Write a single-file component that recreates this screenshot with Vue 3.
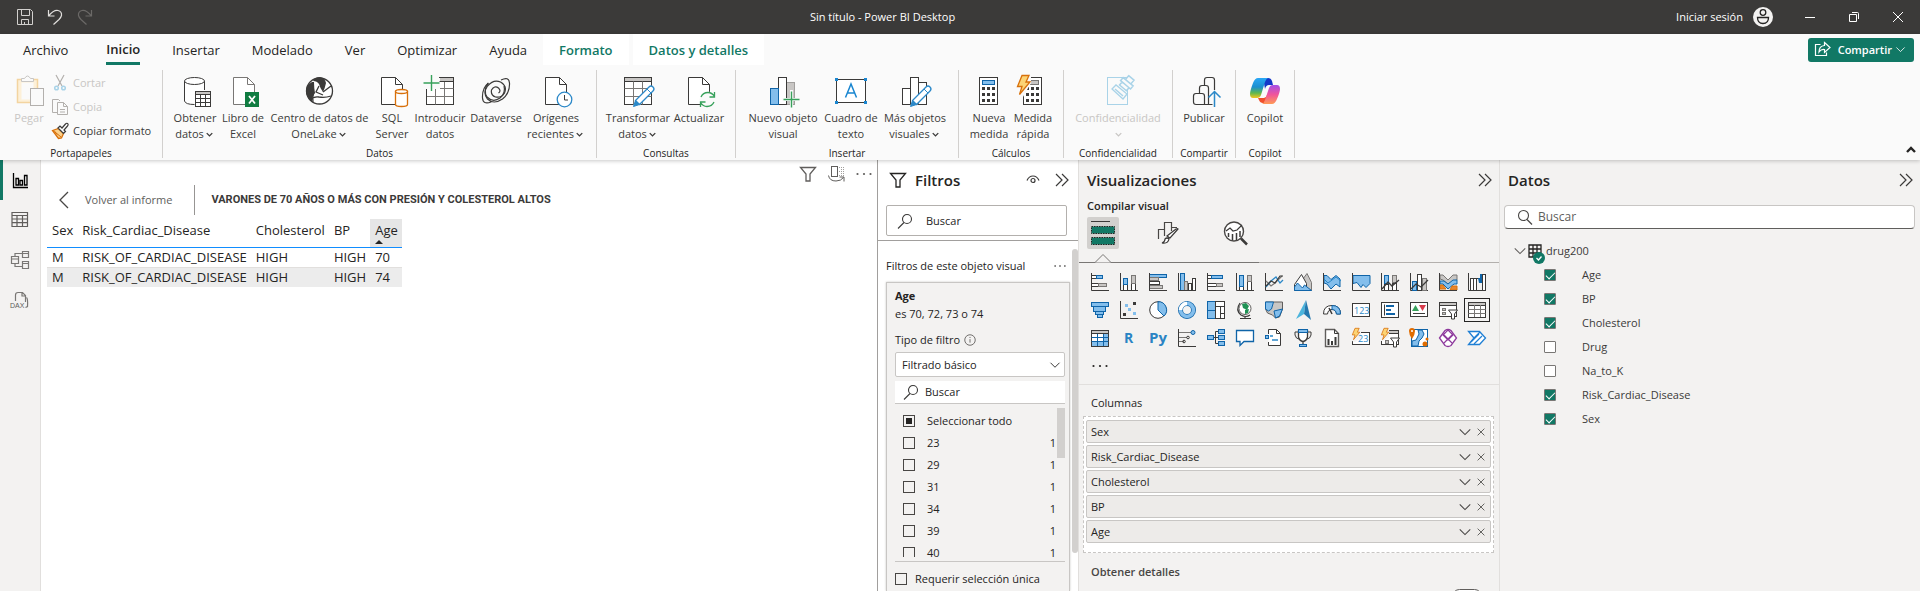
<script setup>
import { h, ref } from 'vue'

const INK = '#3b3a39'
const BLUE = '#83beec'
const EDGE = '#0f64a8'
const GRAY = '#c8c6c4'

const line = (d, stroke = INK, width = 1, extra = '') =>
  `<path d="${d}" fill="none" stroke="${stroke}" stroke-width="${width}" ${extra}/>`
const area = (d, fill, stroke = 'none', width = 1) =>
  `<path d="${d}" fill="${fill}" stroke="${stroke}" stroke-width="${width}"/>`
const box = (x, y, w, hh, fill = '#fff', stroke = INK) =>
  `<rect x="${x}" y="${y}" width="${w}" height="${hh}" fill="${fill}" stroke="${stroke}"/>`
const ring = (x, y, r, fill = 'none', stroke = INK, width = 1) =>
  `<circle cx="${x}" cy="${y}" r="${r}" fill="${fill}" stroke="${stroke}" stroke-width="${width}"/>`

const page = (x, stroke = INK) =>
  area(`M${x} 2.5h14l7 7v20h-21z`, '#fff', stroke) + line(`M${x + 14} 2.5v7h7`, stroke)
const sheet =
  box(2.5, 2.5, 27, 27) + box(2.5, 2.5, 27, 4, GRAY) +
  line('M2.5 13.5h27M2.5 21.5h27M11.5 6.5v23M20.5 6.5v23', '#797775')
const pencil =
  area('M28.5 10.5l3 1.5v3L17 31l-6 1 2-6z', '#fafafa') +
  area('M13.5 25.5L27 12q2-2 4 0t0 4L17.5 29.5z', '#fff', '#2b88c8', 1.3) +
  area('M13.5 25.5l4 4-6 2z', '#2b88c8', '#2b88c8') + line('M25 14l4 4', '#2b88c8')
const plus = (x, y) => line(`M${x} ${y - 8}v16M${x - 8} ${y}h16`, '#37a15b', 1.4)
const dots = (x, y) => [0, 1, 2].map(r => [0, 1, 2].map(c =>
  `<rect x="${x + c * 5}" y="${y + r * 6}" width="3" height="3" fill="${INK}"/>`).join('')).join('')
const bolt = (x, y, s) =>
  `<path transform="translate(${x} ${y}) scale(${s})" d="M5 .5h7L9 7h4L2.5 19.5 5 11.5H.5z" fill="#fcd475" stroke="#d8700b" stroke-width="1.3"/>`
const axis = line('M.5 0v17.5H18')

const large = {
  paste:
    area('M1.5 4.5h20v23h-20z', '#fdf0d8', '#f3d4a0', 1.5) + box(5.5, 7.5, 12, 17, '#fafafa', 'none') +
    area('M5.5 6.5v-3h3q3-5 6 0h3v3z', '#fafafa', '#c8c6c4') + box(14.5, 13.5, 13, 17, '#fafafa', '#b3b0ad'),
  database:
    area('M5.5 6v20q0 4 10 4h10V6', '#fff') + line('M5.5 6v20q1 3.5 10 3.5M25.5 6v9') +
    `<ellipse cx="15.5" cy="6" rx="10" ry="3.5" fill="#fff" stroke="${INK}"/>` +
    box(16.5, 16.5, 15, 15) + box(16.5, 16.5, 15, 3, GRAY) +
    line('M16.5 23.5h15M16.5 27.5h15M21.5 19.5v12M26.5 19.5v12'),
  excel:
    page(6.5, '#797775') + box(18, 17, 14, 15, '#107c41', 'none') +
    line('M22 21l6 7.5M28 21l-6 7.5', '#fff', 1.8),
  onelake:
    ring(15.5, 16, 13, '#fff', INK, 1.3) +
    area('M9 6q2-4 7-4 5 1 6 6-1 5-3 9-3-4-4-8-2-3-6-3z', INK) +
    area('M8 7q-6 3-6 9 0 6 6 11 0-6 3-9-1-5-1-11z', INK) +
    line('M10 17q-2 5-1 10M6 25q4-4 9-3 6 1 12-1M15 11l-3 6 7 3M19 17l8-6', INK, 1.3),
  sql:
    page(5.5) + area('M19.5 16.5v13q0 2 6 2t6-2v-13z', '#fff', '#d8700b', 1.3) +
    '<ellipse cx="25.5" cy="16.5" rx="6" ry="2" fill="#fff" stroke="#d8700b" stroke-width="1.3"/>',
  newtable: sheet + box(0, 0, 16, 14, '#fafafa', 'none') + line('M2.5 15v-1M15 2.5h1') + plus(7.5, 8) + line('M15.5 6.5h14M2.5 15v14'),
  dataverse:
    line('M21 5q8-4 8.5 3 .5 10-7 16-9 6-15 0-5-6 0-13 6-7 13-4 7 4 4 11-3 5-9 4-5-2-4-7 3-5 7-2 3 3 0 5M11 27q-8 3-8.5-4-.5-10 6-15', INK, 1.2) +
    line('M8 8q-5 8-1 14 6 6 13 1 6-5 4-12', INK, 1.2),
  recent: page(5.5) + ring(24.5, 24.5, 7.3, '#fff', '#2b88c8', 1.3) + line('M24.5 20v5H28'),
  transform: sheet + pencil,
  refresh:
    page(5.5) + ring(24.5, 24.5, 8, '#fafafa', 'none') +
    line('M18 22q2-4.5 7-4.5 4 0 6.5 4M31 27q-2 4.5-7 4.5-4 0-6.5-4M31.5 17v5h-5M17.5 32v-5h5', '#37a15b', 1.3),
  newvisual:
    box(19.5, 7.5, 8, 22, GRAY, '#a19f9d') + box(11.5, 2.5, 8, 27) + box(3.5, 13.5, 8, 16, BLUE, EDGE) +
    line('M24.5 15v17M15 24.5h17', '#fafafa', 3) + plus(24.5, 24.5),
  textbox:
    box(1.5, 4.5, 29, 23) +
    [[0, 3], [29, 3], [0, 26], [29, 26]].map(([x, y]) => `<rect x="${x}" y="${y}" width="3" height="3" fill="#1a86d0"/>`).join('') +
    line('M10.5 22.5L16 9l5.5 13.5M12.5 18h7', '#1a86d0', 1.5),
  morevisuals: box(3.5, 13.5, 8, 16) + box(19.5, 7.5, 8, 22) + box(11.5, 2.5, 8, 27) + pencil,
  measure: box(6.5, 2.5, 18, 27) + box(9.5, 5.5, 12, 4, BLUE, EDGE) + dots(9, 12),
  quick: box(6.5, 2.5, 18, 27) + box(9.5, 5.5, 12, 4, GRAY, '#797775') + dots(9, 12) +
    area('M4 0h10v8l-8 14H0z', '#fafafa') + bolt(0, 0, 1),
  sensitivity:
    box(5.5, 2.5, 20, 27, '#fafafa', '#a9d3e8') +
    '<g transform="rotate(40 21 9)" fill="#fafafa" stroke="#a9d3e8" stroke-width="1.5"><path d="M20 -1h7v5h-7zM17 4h13v4H17zM19 8h9v4h-9z"/></g>' +
    area('M10 14l4-4 11 9-4 5z', '#fafafa', '#a9d3e8', 1.3) + line('M13 14l8 7', '#a9d3e8', 1.5),
  publish:
    line('M16.5 10V5q0-2.5 2.5-2.5h5q2.5 0 2.5 2.5v10M11.5 18v-5q0-2.5 2.5-2.5h4q2.5 0 2.5 2.5v16M8 18.5h6q2.5 0 2.5 2.5v8.5H8q-2.5 0-2.5-2.5v-6q0-2.5 2.5-2.5zM16.5 29.5h8', INK, 1.2) +
    line('M26.5 32V17M20.5 22.5l6-6 6 6', '#2b88c8', 1.5),
  copilot:
    '<defs><linearGradient id="cpA" x1="0" y1="0" x2="0" y2="1"><stop offset="0" stop-color="#2aa7f5"/><stop offset=".45" stop-color="#1b8fd0"/><stop offset=".75" stop-color="#5fb84f"/><stop offset="1" stop-color="#f7c51e"/></linearGradient>' +
    '<linearGradient id="cpB" x1="0" y1="0" x2="0" y2="1"><stop offset="0" stop-color="#a54fe8"/><stop offset=".5" stop-color="#f0549b"/><stop offset="1" stop-color="#ff9a55"/></linearGradient></defs>' +
    area('M14 3h5q3 0 4 3l1 4h-4q-3 0-4 4z', '#1438c8') + area('M9 23h6q2 0 3-3l-1 8h-3q-3 0-4-3z', '#f0502c') +
    area('M9 3h10q-2 1-3 4l-4 13q-1 3-4 3H4q-3 0-3-4 0-3 3-11 2-5 5-5z', 'url(#cpA)') +
    area('M23 29H13q2-1 3-4l4-12q1-3 4-3h4q3 0 3 4 0 3-3 10-2 5-5 5z', 'url(#cpB)')
}

const small = {
  save: line('M.5.5h13l2 2v13h-15zM4.5.5v6h8v-6M4.5 15.5v-5h7v5M7.5 15v-2', '#d2d0ce'),
  undo: line('M1.5 1v6h6M1.5 7Q7 .5 11 1.5t3.5 5q-.5 2-2.5 4l-5.5 5', '#e1dfdd', 1.2),
  redo: line('M14.5 1v6h-6M14.5 7Q9 .5 5 1.5t-3.5 5q.5 2 2.5 4l5.5 5', '#6b6967', 1.2),
  cut: line('M4 0l6 11M12 0L6 11', '#b3b0ad', 1.2) + ring(4.5, 13, 1.8, 'none', '#a9d3e8', 1.5) + ring(11.5, 13, 1.8, 'none', '#a9d3e8', 1.5),
  copy: line('M5 13.5H.5V.5h6l1.5 1.5', '#b3b0ad') + area('M5.5 3.5h6l4 4v8h-10z', '#fafafa', '#b3b0ad') + line('M11.5 3.5v4h4M8 10.5h5M8 13h5', '#b3b0ad'),
  brush: area('M.5 7.5l6-2 5 5-2 4.5-3 .5z', '#fbd08a', '#d8700b', 1.3) + line('M3 9l6 5M2 7.5l3 4', '#d8700b') +
    area('M6 5l2-2 2 2 3.5-4q1.5-1.5 2.5 0 .5 1-.5 2L12 7l1.5 1.5-2 2z', '#fff', INK, 1.2),
  share: line('M5.5 2.5h-5v11h11v-3', '#fff', 1.2) + line('M9.5.5l5.5 5-5.5 5v-3Q6 7 4 10q0-6 5.500-6.500z', '#fff', 1.2),
  funnel: line('M.5 1.5h15L10 8v7H6V8z', 'currentColor', 1.3),
  focus: box(3.5, .5, 6, 10, 'none', '#605e5c') + line('M11 1.500h5M11 5.500h5M11 9.500h5M13.500 1v9M15.500 1v9', '#a19f9d', 1, 'stroke-dasharray="1 1"') +
    line('M.5 9.500q1 5.500 7.500 5.500 5 0 7.500-3.500M11.500 11h4.500v4.500', '#605e5c'),
  more: '<g fill="currentColor"><circle cx="1.5" cy="8" r="1.1"/><circle cx="8" cy="8" r="1.1"/><circle cx="14.5" cy="8" r="1.1"/></g>',
  eye: line('M2 8.500q2-4.500 6-4.500t6 4.500', INK, 1.2) + ring(8, 8.5, 2, 'none', INK, 1.2),
  collapse: line('M2 2l6 6-6 6M8 2l6 6-6 6', INK, 1.2),
  find: ring(10, 6, 4.5, 'none', INK, 1.1) + line('M7 9.5L1 15.5', INK, 1.1),
  find2: ring(6.5, 6.5, 5, 'none', '#484644', 1.1) + line('M10 10.5l5 5', '#484644', 1.2),
  info: ring(8, 8, 6, 'none', '#605e5c') + line('M8 7v4M8 4.5v1.2', '#605e5c'),
  down: line('M2 5l6 6 6-6', 'currentColor', 1.2),
  chunky: line('M4 6l4 4 4-4', 'currentColor', 2),
  up: line('M4 10l4-4 4 4', 'currentColor', 2.4),
  close: line('M3.5 3.5l9 9M12.5 3.5l-9 9', 'currentColor', 1.1),
  back: line('M12 0L4 8l8 8', '#484644', 1.3),
  minimize: line('M3 8.5h10', '#fff'),
  restore: line('M3.5 5.5h7v7h-7zM6 3.5h5.5q1 0 1 1V10', '#fff'),
  winclose: line('M3 3l10 10M13 3L3 13', '#fff'),
  datatable: line('M2 2h12v12H2zM2 6h12M2 10h12M6 2v12M10 2v12', '#252423', 1.3)
}

const nav = {
  report: line('M3.5 3v14.5H18', '#000', 1.3) + line('M6 8.5h2.5V15H6zM10 10.5h2.5V15H10zM14.5 5.5H17V15h-2.5z', '#000', 1.3),
  table: line('M2 2.5h15.5v14H2zM2 5.5h15.5M2 9h15.5M2 12.7h15.5M7 5v11M12.5 5v11', '#605e5c', 1.2),
  model: line('M1.5 6.5h7v7h-7zM12.5 1.5h6v6h-6zM12.5 11.5h6v7h-6zM1.5 9h7M12.5 3.5h6M12.5 13.5h6M5 6V3.5h7.5M5 13.5v3h7.5', '#797775', 1.2),
  dax: line('M5.5 11V5q0-2.5 2.5-2.5h4.5l3 3V12M12 3v3h3M16.5 7.5q1.5 1 1 9l-2 1', '#797775', 1.2) +
    '<text x="0" y="18" font-family="Liberation Sans, sans-serif" font-size="7" fill="#605e5c">DAX</text>'
}

const B = (x, y, w, hh) => box(x + .5, y + .5, w, hh, BLUE, EDGE)
const G = (x, y, w, hh) => box(x + .5, y + .5, w, hh, GRAY, '#797775')
const W = (x, y, w, hh) => box(x + .5, y + .5, w, hh)
const glyph = (t, x, size) =>
  `<text x="${x}" y="14" font-family="Open Sans, sans-serif" font-weight="700" font-size="${size}" fill="#2a84c4">${t}</text>`
const num = '<text x="2" y="13" font-family="Open Sans, sans-serif" font-size="9" fill="#2b88c8">123</text>'

const visuals = [
  ['Barras apiladas', axis + W(0, 2, 5, 3) + B(5, 2, 6, 3) + W(0, 10, 7, 3) + G(7, 10, 8, 3)],
  ['Columnas apiladas', axis + W(3, 11, 4, 6) + B(3, 5, 4, 6) + W(11, 10, 4, 7) + G(11, 2, 4, 8)],
  ['Barras agrupadas', axis + B(0, 1, 17, 3) + G(0, 4, 9, 3) + W(0, 8, 10, 3) + G(0, 12, 13, 3) + axis],
  ['Columnas agrupadas', B(2, 0, 4, 17) + G(6, 8, 3, 9) + W(10, 10, 3, 7) + W(14, 5, 3, 12) + axis],
  ['Barras 100 %', axis + W(0, 2, 4, 3) + B(4, 2, 11, 3) + W(0, 10, 9, 3) + G(9, 10, 6, 3)],
  ['Columnas 100 %', axis + W(3, 13, 4, 4) + B(3, 2, 4, 11) + W(11, 8, 4, 9) + G(11, 2, 4, 6)],
  ['Líneas', axis + line('M1 8l5 5 4-3 7-7', '#797775', 1.2) + line('M1 14l5-6 5-4 4 6 3-3', '#2b88c8', 1.3) + line('M1 13l5-5 4 2 5-7 3 0', INK, 1.2)],
  ['Áreas', area('M6 10l7-9.5 4.5 9v8H6z', GRAY, '#797775') + area('M.5 17.5v-6l7-10 5 9v7z', '#fff', INK) + area('M.5 17.5V14l3-4 5 5 2-3 7 5.500z', BLUE, EDGE)],
  ['Áreas apiladas', area('M1 2.500h3l4 4 5-4 4 3.500v8l-4-3-5 5-4-5-3-1z', BLUE, EDGE) + line('M1 6l4 4 4-3 4-3 5 4', '#2b88c8') + axis],
  ['Áreas 100 %', area('M1 2.5h17v8l-4 4-3-3-2 3-4-5-4 1z', BLUE, EDGE) + axis],
  ['Columnas y líneas apiladas', axis + B(3, 2, 4, 8) + W(3, 11, 4, 6) + G(11, 2, 4, 7) + W(11, 10, 4, 7) + line('M1 16l6-7 4 4 7-6', INK, 1.3)],
  ['Columnas y líneas agrupadas', axis + B(2, 8, 4, 9) + W(7, 1, 4, 16) + G(12, 5, 4, 12) + line('M1 16l5-5 5 3 7-7', INK, 1.3)],
  ['Cintas', area('M1 2h3l5 5 5-5h4v5l-4 1-5 3-5-4-3-1z', GRAY, '#797775') + area('M1 8h4l4 3 5-4h4v4h-3l-6 5-5-5H1z', BLUE, EDGE) + area('M1 12h3l3 4H1zM13 13h5v4h-7z', '#e8862e', '#d8700b') + axis],
  ['Cascada', W(2, 5, 3, 12) + W(5, 5, 3, 12) + line('M8.500 5.500h3') + area('M10 5h2V1h3v9h-4z', EDGE) + W(14, 1, 3, 16) + axis],
  ['Embudo', B(0, 1, 17, 4) + B(2, 5, 12, 5) + B(4, 10, 8, 3) + B(6, 13, 5, 3)],
  ['Dispersión', axis + [[5, 3, BLUE], [13, 1, INK], [8, 7, BLUE], [3, 12, INK], [13, 11, BLUE]].map(([x, y, c]) => `<rect x="${x}" y="${y}" width="3" height="3" fill="${c}"/>`).join('')],
  ['Circular', ring(9, 9, 8.3, '#fff') + area('M9 .7A8.3 8.3 0 0 1 15 15L9 9z', BLUE, EDGE)],
  ['Anillos', ring(9, 9, 6.5, 'none', EDGE, 5) + ring(9, 9, 6.5, 'none', BLUE, 3.5) + line('M2.5 9A6.5 6.5 0 0 1 9 2.5', '#fff', 3.5)],
  ['Treemap', B(0, 0, 8, 9) + B(0, 9, 8, 8) + W(8, 0, 9, 5) + W(8, 5, 5, 12) + W(13, 5, 4, 7) + W(13, 12, 4, 5)],
  ['Mapa', ring(9, 7.5, 6, '#fff', '#605e5c') + area('M6 3l4-1 3 3-2 4-4-2zM9 9l4-1-1 4-3 1z', '#1f9254') + line('M4 2q-5 7 1 12 5 3 9 0M9 15v2.5M4 17.5h11', INK, 1.2)],
  ['Mapa coroplético', area('M.5 1h17v7l-3 8-4 1-3-3-5-2-2-4z', GRAY, '#605e5c') + area('M.5 1h8l-2 7-3 2-3-2zM9 10l8.500-2-3 7-4 2z', BLUE, EDGE)],
  ['Azure Maps', area('M12-1L2 18l8-5z', '#4bb4dc') + area('M12-1l5 20-7-6z', '#2478ae')],
  ['Medidor', area('M.5 13q0-8.5 8.5-8.5t8.5 8.5h-4Q13 8.5 9 8.5T4.5 13z', '#fff', INK) + area('M9 4.5q8.5 0 8.5 8.5h-4Q13 8.5 9 8.5z', BLUE, EDGE) + line('M9 13L6 7', INK, 1.5)],
  ['Tarjeta', box(.5, 2.5, 17, 13) + num],
  ['Tarjeta de varias filas', W(0, 1, 17, 15) + line('M3.5 3.5v11') + line('M5 5h8M5 9h5M5 13h9', EDGE, 2)],
  ['KPI', W(0, 1, 17, 14) + area('M2 10l3.5-6L9 10z', '#37a15b') + area('M9 4h7l-3.5 6z', '#d83b4b') + line('M3 12.5h12')],
  ['Segmentación', box(.5, 1.5, 17, 14) + box(.5, 1.5, 17, 3, GRAY) + G(3, 7, 3, 2) + G(3, 11, 3, 2) + area('M9.5 9h9l-3 4v5h-3v-5z', '#fff', INK)],
  ['Tabla', W(0, 1, 17, 15) + box(.5, 1.5, 17, 3, GRAY) + line('M.5 8.5h17M.5 12.5h17M6.5 4v12M12.5 4v12', '#797775')],
  ['Matriz', W(0, 1, 17, 16) + area('M12 5h5v12H1v-4h11z', BLUE) + line('M.5 8.5h17M.5 12.5h17M6.5 4v13M12.5 4v13', EDGE) + box(.5, 1.5, 17, 3, GRAY)],
  ['Script de R', glyph('R', 4, 14)],
  ['Script de Python', glyph('Py', 0, 15)],
  ['Influenciadores clave', axis + line('M1 3.5h12M1 8.5h8M1 12.5h5', '#797775') + ring(15, 3.5, 2, BLUE, EDGE) + ring(10, 8.5, 1.3) + ring(6, 12.5, 1.3)],
  ['Árbol de descomposición', line('M6 8.5h5M8.5 2.5v12M8.5 2.5h3M8.5 14.5h3') + B(0, 6, 6, 4) + B(11, 0, 6, 4) + B(11, 6, 6, 4) + B(11, 12, 6, 4)],
  ['Preguntas y respuestas', area('M.5 1.5h17v11H8l-4 4v-4H.5z', '#fff', EDGE, 1.3)],
  ['Narrativa', area('M3.5 5V.5h8l4 4v12h-12V13', '#fff', INK) + line('M11.5.5v4h4') + line('M5 7h3M7 11h6', '#2b88c8', 1.4) + B(0, 6, 3, 3)],
  ['Objetivos', line('M4 3H1v3q1 4 4 4M14 3h3v3q-1 4-4 4') + area('M4.5 1.5h9V8q-1 4-4.5 4.5Q5.5 12 4.5 8zM9 12v4', '#fff', INK, 1.3) + box(4.5, .5, 9, 3, BLUE, EDGE) + box(5.5, 15.5, 7, 2, BLUE, EDGE)],
  ['Informe paginado', area('M2.5.5h9l4 4v13h-13z', '#fff', '#605e5c', 1.4) + line('M11.5.5v4h4') + line('M5.5 10v6M9 12v4M12.5 8v8', INK, 2)],
  ['Tarjeta nueva', box(.5, 3.5, 17, 12) + area('M0 0h9v9l-6 4-3-1z', '#f3f2f1') + '<text x="6" y="13" font-family="Open Sans, sans-serif" font-size="9" fill="#2b88c8">23</text>' + bolt(0, -1, .6)],
  ['Segmentación nueva', box(.5, 1.5, 17, 14) + box(.5, 1.5, 17, 3, GRAY) + area('M0 0h8v8l-6 4H0z', '#f3f2f1') + G(4, 11, 3, 3) + area('M9.5 9h9l-3 4v5h-3v-5z', '#fff', INK) + bolt(0, -1, .6)],
  ['ArcGIS', box(1.5, .5, 16, 17, '#fff', EDGE) + area('M8 1h4l2 4-2 4-3 3-1 5H2v-5l4-1 3-6z', BLUE, EDGE) + area('M-1 2q0-3 3-3t3 3q0 4-3 8-3-4-3-8z', '#e06c00') + ring(2, 2, 1, '#fff', 'none') + ring(15, 15, 2.5, '#e06c00', 'none') + ring(17, 10, 1.5, '#e06c00', 'none')],
  ['Power Apps', area('M.5 9L6 1.5q3-2 6 0L17.500 9 12 16.500q-3 2-6 0z', '#fff', '#8e3a9d', 1.3) + line('M4 5l9 9M14 5l-9 9M9 1l5 5-5 5-5-5z', '#8e3a9d', 1.2)],
  ['Power Automate', area('M.5 2.5h11L17.5 9l-6 6.5H.5L6 9z', '#fff', '#1f7fd4', 1.3) + line('M6 9l6-6M3 13l8-8M6 15l8-8', '#1f7fd4', 1.2)]
]

const format = line('M1.5 18V8.5h6M7.5 15V1.5h7V10M14.5 6.5H20', '#484644', 1.2) +
  area('M21 8l-8 9-3-2 9-7q2-1 2 0zM12 18q-1 5-7 4 3-1 3-4 2-2 4 0z', '#fff', INK, 1.2)
const analytics = ring(11, 10.5, 9.5, '#fff', '#484644', 1.4) +
  line('M3 10l4-3 3 3 4-1 5-5', INK, 1.2) + line('M5.5 12v4M9.5 13v6M13.5 12v7M17 10v6', INK, 1.5) + line('M18 17.5l6 6', INK, 2.5)
const build = line('M4 4.5h19', INK) +
  '<g fill="#117865" stroke="#252423" stroke-dasharray="1.5 1"><rect x="4.5" y="9.5" width="23" height="7"/><rect x="4.5" y="20.5" width="23" height="7"/></g>'

const Icon = ({ art, s = 16, w }) =>
  h('svg', { width: w || s, height: s, viewBox: `0 0 ${w || s} ${s}`, class: 'icon', 'aria-hidden': 'true', innerHTML: art })
Icon.props = ['art', 's', 'w']

const tabs = ['Archivo', 'Inicio', 'Insertar', 'Modelado', 'Ver', 'Optimizar', 'Ayuda']
const groups = [
  { name: 'Datos', items: [
    ['database', 'Obtener', 'datos', 48, true], ['excel', 'Libro de', 'Excel', 48], ['onelake', 'Centro de datos de', 'OneLake', 105, true],
    ['sql', 'SQL', 'Server', 40], ['newtable', 'Introducir', 'datos', 56], ['dataverse', 'Dataverse', '', 56], ['recent', 'Orígenes', 'recientes', 64, true]] },
  { name: 'Consultas', items: [['transform', 'Transformar', 'datos', 66, true], ['refresh', 'Actualizar', '', 56]] },
  { name: 'Insertar', items: [['newvisual', 'Nuevo objeto', 'visual', 78], ['textbox', 'Cuadro de', 'texto', 58], ['morevisuals', 'Más objetos', 'visuales', 70, true]] },
  { name: 'Cálculos', items: [['measure', 'Nueva', 'medida', 44], ['quick', 'Medida', 'rápida', 44]] },
  { name: 'Confidencialidad', off: true, items: [['sensitivity', 'Confidencialidad', '', 92, true]] },
  { name: 'Compartir', items: [['publish', 'Publicar', '', 46]] },
  { name: 'Copilot', items: [['copilot', 'Copilot', '', 42]] }
]
const views = [['report', 'Informe'], ['table', 'Tabla'], ['model', 'Modelo'], ['dax', 'Consultas DAX']]
const ages = [23, 29, 31, 34, 39, 40]
const columns = ['Sex', 'Risk_Cardiac_Disease', 'Cholesterol', 'BP', 'Age']
const rows = [['M', 'RISK_OF_CARDIAC_DISEASE', 'HIGH', 'HIGH', 70], ['M', 'RISK_OF_CARDIAC_DISEASE', 'HIGH', 'HIGH', 74]]
const fields = ref([
  { name: 'Age', on: true }, { name: 'BP', on: true }, { name: 'Cholesterol', on: true }, { name: 'Drug', on: false },
  { name: 'Na_to_K', on: false }, { name: 'Risk_Cardiac_Disease', on: true }, { name: 'Sex', on: true }
])
</script>

<template>
  <div class="app">
    <header class="titlebar">
      <div class="quick">
        <button aria-label="Guardar"><Icon :art="small.save" /></button>
        <button aria-label="Deshacer"><Icon :art="small.undo" /></button>
        <button aria-label="Rehacer"><Icon :art="small.redo" /></button>
      </div>
      <h1>Sin título - Power BI Desktop</h1>
      <div class="account">
        <button class="signin">Iniciar sesión
          <svg width="20" height="20" viewBox="0 0 20 20" aria-hidden="true">
            <circle cx="10" cy="10" r="10" fill="#f3f2f1" />
            <circle cx="10" cy="5.5" r="2.8" fill="none" stroke="#252423" stroke-width="1.3" />
            <path d="M4.5 10.5h11q0 6-5.5 6t-5.5-6z" fill="none" stroke="#252423" stroke-width="1.3" />
          </svg>
        </button>
        <button class="win" aria-label="Minimizar"><Icon :art="small.minimize" /></button>
        <button class="win" aria-label="Restaurar"><Icon :art="small.restore" /></button>
        <button class="win" aria-label="Cerrar"><Icon :art="small.winclose" /></button>
      </div>
    </header>

    <section class="ribbon">
      <nav class="tabs">
        <button v-for="t in tabs" :key="t" :class="{ current: t === 'Inicio', file: t === 'Archivo' }"><span>{{ t }}</span></button>
        <button class="context">Formato</button>
        <button class="context">Datos y detalles</button>
        <button class="share"><Icon :art="small.share" />Compartir<Icon :art="small.down" class="tiny" /></button>
      </nav>
      <div class="groups">
        <div class="group clipboard">
          <div class="items">
            <button class="big off" disabled><Icon :art="large.paste" :s="32" /><span>Pegar</span></button>
            <div class="stack">
              <button class="off" disabled><Icon :art="small.cut" />Cortar</button>
              <button class="off" disabled><Icon :art="small.copy" />Copia</button>
              <button><Icon :art="small.brush" />Copiar formato</button>
            </div>
          </div>
          <p>Portapapeles</p>
        </div>
        <div v-for="g in groups" :key="g.name" class="group">
          <div class="items">
            <button v-for="[icon, a, b, width, menu] in g.items" :key="icon" class="big" :class="{ off: g.off }" :disabled="g.off" :style="{ width: width + 'px' }">
              <Icon :art="large[icon]" :s="32" />
              <span>{{ a }}</span>
              <span class="second">{{ b }}<Icon v-if="menu" :art="small.chunky" class="menu" /></span>
            </button>
          </div>
          <p>{{ g.name }}</p>
        </div>
        <button class="fold" aria-label="Contraer la cinta"><Icon :art="small.up" /></button>
      </div>
    </section>

    <main class="work">
      <nav class="views">
        <button v-for="[id, label] in views" :key="id" :class="{ current: id === 'report' }" :aria-label="label"><Icon :art="nav[id]" :s="20" /></button>
      </nav>

      <section class="canvas">
        <div class="tools">
          <button aria-label="Filtros del objeto"><Icon :art="small.funnel" /></button>
          <button aria-label="Modo de enfoque"><Icon :art="small.focus" /></button>
          <button aria-label="Más opciones"><Icon :art="small.more" /></button>
        </div>
        <div class="drill">
          <button><Icon :art="small.back" />Volver al informe</button>
          <h2>VARONES DE 70 AÑOS O MÁS CON PRESIÓN Y COLESTEROL ALTOS</h2>
        </div>
        <table>
          <thead>
            <tr><th v-for="c in columns" :key="c" :class="{ sorted: c === 'Age' }">{{ c }}</th></tr>
          </thead>
          <tbody>
            <tr v-for="r in rows" :key="r[4]"><td v-for="(v, i) in r" :key="i">{{ v }}</td></tr>
          </tbody>
        </table>
      </section>

      <aside class="filters">
        <div class="head">
          <Icon :art="small.funnel" />
          <h2>Filtros</h2>
          <button aria-label="Mostrar u ocultar"><Icon :art="small.eye" /></button>
          <button aria-label="Contraer Filtros"><Icon :art="small.collapse" /></button>
        </div>
        <label class="search"><Icon :art="small.find" /><input type="text" placeholder="Buscar" aria-label="Buscar filtros"></label>
        <div class="scroller">
          <div class="scope"><span>Filtros de este objeto visual</span><button aria-label="Más opciones de filtros"><Icon :art="small.more" class="dots" /></button></div>
          <div class="card">
            <h3>Age</h3>
            <p>es 70, 72, 73 o 74</p>
            <label for="kind" class="kind">Tipo de filtro <Icon :art="small.info" /></label>
            <div class="select"><select id="kind"><option>Filtrado básico</option></select><Icon :art="small.down" /></div>
            <label class="search inner"><Icon :art="small.find" /><input type="text" placeholder="Buscar" aria-label="Buscar valores"></label>
            <div class="values">
              <label><input type="checkbox" class="partial"><span>Seleccionar todo</span></label>
              <label v-for="a in ages" :key="a"><input type="checkbox"><span>{{ a }}</span><b>1</b></label>
              <i class="thumb"></i>
            </div>
            <label class="single"><input type="checkbox">Requerir selección única</label>
          </div>
          <i class="track"></i>
        </div>
      </aside>

      <aside class="visual">
        <div class="head"><h2>Visualizaciones</h2><button aria-label="Contraer Visualizaciones"><Icon :art="small.collapse" /></button></div>
        <h3>Compilar visual</h3>
        <div class="modes">
          <button class="current" aria-label="Compilar"><Icon :art="build" :s="32" /></button>
          <button aria-label="Formato"><Icon :art="format" :s="24" /></button>
          <button aria-label="Análisis"><Icon :art="analytics" :s="25" /></button>
        </div>
        <div class="rule">
          <svg width="32" height="10" viewBox="0 0 32 10" aria-hidden="true"><path d="M0 9.5h8l8-8 8 8h8" fill="#f3f2f1" stroke="#797775" /></svg>
        </div>
        <div class="gallery">
          <button v-for="[label, art] in visuals" :key="label" :aria-label="label" :class="{ current: label === 'Tabla' }"><Icon :art="art" :s="18" /></button>
          <button aria-label="Más objetos"><Icon :art="small.more" /></button>
        </div>
        <div class="wells">
          <h4>Columnas</h4>
          <ul>
            <li v-for="c in columns" :key="c">
              <span>{{ c }}</span>
              <button :aria-label="'Opciones de ' + c"><Icon :art="small.down" /></button>
              <button :aria-label="'Quitar ' + c"><Icon :art="small.close" /></button>
            </li>
          </ul>
          <h5>Obtener detalles</h5>
          <input type="checkbox" class="toggle" aria-label="Entre varios informes">
        </div>
      </aside>

      <aside class="data">
        <div class="head"><h2>Datos</h2><button aria-label="Contraer Datos"><Icon :art="small.collapse" /></button></div>
        <label class="search"><Icon :art="small.find2" /><input type="text" placeholder="Buscar" aria-label="Buscar datos"></label>
        <button class="entity">
          <Icon :art="small.down" />
          <span class="tableicon">
            <Icon :art="small.datatable" />
            <svg class="badge" width="12" height="12" viewBox="0 0 12 12" aria-hidden="true"><circle cx="6" cy="6" r="6" fill="#117865" /><path d="M3.5 6l2 2 3-3.5" fill="none" stroke="#fff" stroke-width="1.3" /></svg>
          </span>
          drug200
        </button>
        <label v-for="f in fields" :key="f.name" class="field"><input v-model="f.on" type="checkbox">{{ f.name }}</label>
      </aside>
    </main>
  </div>
</template>

<style>
body { margin: 0; overflow: hidden; }
</style>

<style scoped>
.app { display: flex; flex-direction: column; height: 100vh; font: 11px/16px "Open Sans", "Noto Sans", sans-serif; color: #252423; background: #fff; }
.app * { box-sizing: border-box; }
h1, h2, h3, h4, h5, p, ul { margin: 0; padding: 0; font-weight: 400; font-size: inherit; }
button { font: inherit; color: inherit; background: none; border: 0; padding: 0; margin: 0; white-space: nowrap; display: flex; align-items: center; }
input, select { font: inherit; color: inherit; margin: 0; min-width: 0; }
.icon { flex: none; display: block; overflow: visible; }

.titlebar { display: flex; align-items: center; height: 34px; flex: none; background: #3b3a39; color: #fff; }
.quick { display: flex; gap: 14px; width: 108px; padding-left: 17px; }
.titlebar h1 { flex: 1; text-align: center; }
.account { display: flex; align-items: center; padding-left: 19px; }
.signin { gap: 10px; margin-right: 15px; }
.win { width: 44px; height: 34px; justify-content: center; }

.ribbon { flex: none; background: #fafafa; position: relative; z-index: 1; box-shadow: 0 1px 4px rgba(0, 0, 0, .22); }
.tabs { display: flex; align-items: center; height: 36px; padding: 0 6px 5px 7px; font-size: 13px; }
.tabs > button { height: 31px; padding: 0 16px; }
.tabs .file { margin-right: 6px; }
.tabs .current { font-weight: 600; }
.tabs .current span { line-height: 25px; padding-top: 3px; border-bottom: 3px solid #117865; }
.tabs .context { background: #fff; color: #117865; font-weight: 600; margin-right: 4px; }
.tabs .share { margin-left: auto; height: 24px; padding: 0 8px 0 7px; gap: 7px; border-radius: 3px; background: #117865; color: #fff; font-size: 11px; font-weight: 600; }
.tiny { width: 11px; height: 11px; margin-left: -4px; }
.groups { display: flex; height: 90px; padding-bottom: 2px; position: relative; }
.group { border-right: 1px solid #d2d0ce; padding: 5px 8px 0; display: flex; flex-direction: column; color: #3b3a39; }
.clipboard { width: 163px; }
.items { display: flex; flex: 1; }
.group p { margin: 0 -6px; text-align: center; font-size: 10px; line-height: 10px; color: #252423; }
.big { flex-direction: column; justify-content: flex-start; }
.big > .icon { margin-bottom: 3px; }
.second { display: flex; align-items: center; justify-content: center; height: 16px; }
.menu { width: 11px; height: 11px; }
.group .off { color: #c8c6c4; }
.clipboard .big { width: 42px; }
.clipboard .big .icon { margin-left: 6px; }
.stack { margin-left: 2px; margin-top: -4px; }
.stack button { height: 24px; gap: 5px; }
.fold { position: absolute; right: 1px; bottom: 2px; }

.work { flex: 1; min-height: 0; display: flex; overflow: hidden; }
.views { flex: none; width: 41px; background: #f3f2f1; border-right: 1px solid #e1dfdd; }
.views button { width: 100%; height: 40px; justify-content: center; }
.views .current { box-shadow: inset 3px 0 #117865; }
.canvas { flex: 1; min-width: 0; padding: 5px 5px 0 6px; }
.tools { display: flex; justify-content: flex-end; gap: 12px; height: 17px; color: #605e5c; }
.drill { display: flex; align-items: center; height: 32px; margin: 2px 0 3px 9px; }
.drill button { height: 30px; gap: 13px; padding-right: 22px; border-right: 1px solid #979593; color: #605e5c; }
.drill h2 { padding-left: 16px; font: 700 11px/16px Roboto, sans-serif; color: #3b3a39; }
table { margin-top: 1px; border-collapse: collapse; font-size: 13px; line-height: 18px; }
th, td { text-align: left; font-weight: 400; padding: 0 4px 0 5px; white-space: nowrap; }
thead th { height: 28px; vertical-align: top; padding-top: 2px; border-bottom: 1px solid #118dff; }
.sorted { background: #e6e6e6; position: relative; }
.sorted::after { content: ""; position: absolute; left: 5px; bottom: 3px; border: 4px solid transparent; border-top: 0; border-bottom-color: #252423; }
td { height: 20px; }
tbody tr + tr { background: #ececec; border-top: 1px solid #e1dfdd; }

.head { display: flex; align-items: center; height: 40px; }
.head h2 { flex: 1; font-size: 15px; font-weight: 600; line-height: 20px; }
.search { display: flex; align-items: center; background: #fff; border: 1px solid #b3b0ad; border-radius: 2px; }
.search input { flex: 1; border: 0; padding: 0; background: none; outline: 0; }
.search input::placeholder { color: #252423; opacity: 1; }
input[type="checkbox"] { appearance: none; flex: none; width: 12px; height: 12px; border: 1px solid #484644; background: none; }

.filters { flex: none; width: 201px; border-left: 1px solid #a19f9d; background: #fff; display: flex; flex-direction: column; }
.filters .head { padding: 0 8px 0 12px; gap: 13px; }
.filters .head h2 { margin-left: -4px; }
.filters .search { height: 31px; margin: 5px 11px 4px 8px; padding-left: 10px; gap: 13px; flex: none; }
.scroller { flex: 1; min-height: 0; display: flex; flex-direction: column; border-top: 1px solid #a19f9d; padding: 17px 8px 0; position: relative; }
.scope { display: flex; justify-content: space-between; flex: none; padding-right: 4px; }
.dots { width: 12px; }
.card { flex: 1; min-height: 0; margin-top: 8px; padding: 5px 4px 0 8px; background: #f3f2f1; border: 1px solid #c8c6c4; border-bottom: 0; box-shadow: 0 0 2px #c8c6c4; }
.card h3 { font-weight: 700; }
.card p { margin-top: 2px; }
.kind { display: flex; align-items: center; gap: 3px; margin-top: 10px; }
.kind .icon { width: 14px; }
.select { display: flex; align-items: center; height: 25px; margin-top: 4px; padding-right: 3px; background: #fff; border: 1px solid #c8c6c4; border-radius: 2px; }
.select select { flex: 1; appearance: none; border: 0; background: none; padding: 0 6px; outline: 0; }
.select .icon { width: 12px; height: 12px; }
.filters .inner { height: 23px; margin: 4px 0 0; padding-left: 8px; gap: 6px; border: 0; border-bottom: 1px solid #c8c6c4; border-radius: 0; }
.values { height: 153px; overflow: hidden; position: relative; padding-top: 6px; }
.values label { display: flex; align-items: center; height: 22px; padding: 0 9px 0 8px; gap: 12px; }
.values span { flex: 1; }
.values b { font-weight: 400; }
.values .partial { background: #252423; box-shadow: inset 0 0 0 2px #f3f2f1; }
.thumb { position: absolute; right: 0; top: 4px; width: 8px; height: 50px; background: #d2d0ce; }
.single { display: flex; align-items: center; gap: 8px; margin-top: 4px; padding-top: 9px; border-top: 1px solid #c8c6c4; white-space: nowrap; }
.track { position: absolute; right: 0; top: 8px; bottom: 38px; width: 6px; border-radius: 3px; background: #d2d0ce; }

.visual, .data { flex: none; width: 421px; background: #f3f2f1; border-left: 1px solid #e1dfdd; }
.visual .head, .data .head { padding: 0 6px 0 8px; }
.visual h3 { padding-left: 8px; margin-top: -2px; font-weight: 600; height: 19px; }
.modes { display: flex; align-items: center; gap: 34px; padding-left: 8px; }
.modes button { width: 32px; height: 32px; justify-content: center; }
.modes .current { background: #d2d0ce; border-radius: 2px; }
.rule { display: flex; align-items: flex-end; height: 14px; padding-left: 8px; background: linear-gradient(90deg, #797775 180px, #b3b0ad 180px) bottom / 100% 1px no-repeat; }
.gallery { display: grid; grid-template-columns: repeat(14, 29px); grid-auto-rows: 28px; padding: 5px 0 4px 8px; border-bottom: 1px solid #e1dfdd; }
.gallery button { width: 26px; height: 28px; justify-content: center; }
.gallery .current { height: 24px; align-self: center; box-shadow: inset 0 0 0 1px #252423; }
.wells { padding: 10px 5px 0 4px; }
.wells h4, .wells h5 { padding-left: 8px; }
.wells h5 { font-weight: 600; margin-top: 11px; color: #484644; }
.wells ul { list-style: none; margin-top: 5px; padding: 3px 2px 9px; border: 1px dashed #c8c6c4; background: #fff; display: grid; gap: 2px; }
.wells li { display: flex; align-items: center; height: 23px; padding: 0 1px 0 4px; background: #edebe9; border: 1px solid #c8c6c4; border-radius: 2px; color: #252423; }
.wells li span { flex: 1; }
.wells li button { width: 16px; height: 16px; justify-content: center; color: #484644; }
.wells li .icon { width: 12px; height: 12px; }
.wells li button:first-of-type .icon { width: 14px; height: 14px; }
.wells input.toggle { display: block; width: 30px; height: 15px; margin: 9px 12px 0 auto; border-radius: 8px; border-color: #605e5c; background: #fff; }

.data .search { height: 24px; margin: 5px 5px 0 4px; padding-left: 12px; gap: 5px; border-radius: 4px; border-color: #c8c6c4; border-bottom-color: #605e5c; font-size: 12px; }
.data .search input::placeholder { color: #605e5c; }
.entity { height: 22px; margin: 11px 0 1px 13px; color: #3b3a39; }
.entity > .icon { color: #605e5c; width: 14px; }
.tableicon { position: relative; width: 18px; height: 16px; margin-right: 1px; }
.badge { position: absolute; right: 0; bottom: -5px; }
.field { display: flex; align-items: center; gap: 26px; height: 24px; padding-left: 44px; color: #3b3a39; }
.field input { border-color: #797775; border-radius: 1px; background: #fff; position: relative; }
.field input:checked { background: #117865; }
.field input:checked::after { content: ""; position: absolute; left: 1px; top: 2px; width: 8px; height: 4px; border: solid #fff; border-width: 0 0 1px 1px; transform: rotate(-45deg); }
</style>
